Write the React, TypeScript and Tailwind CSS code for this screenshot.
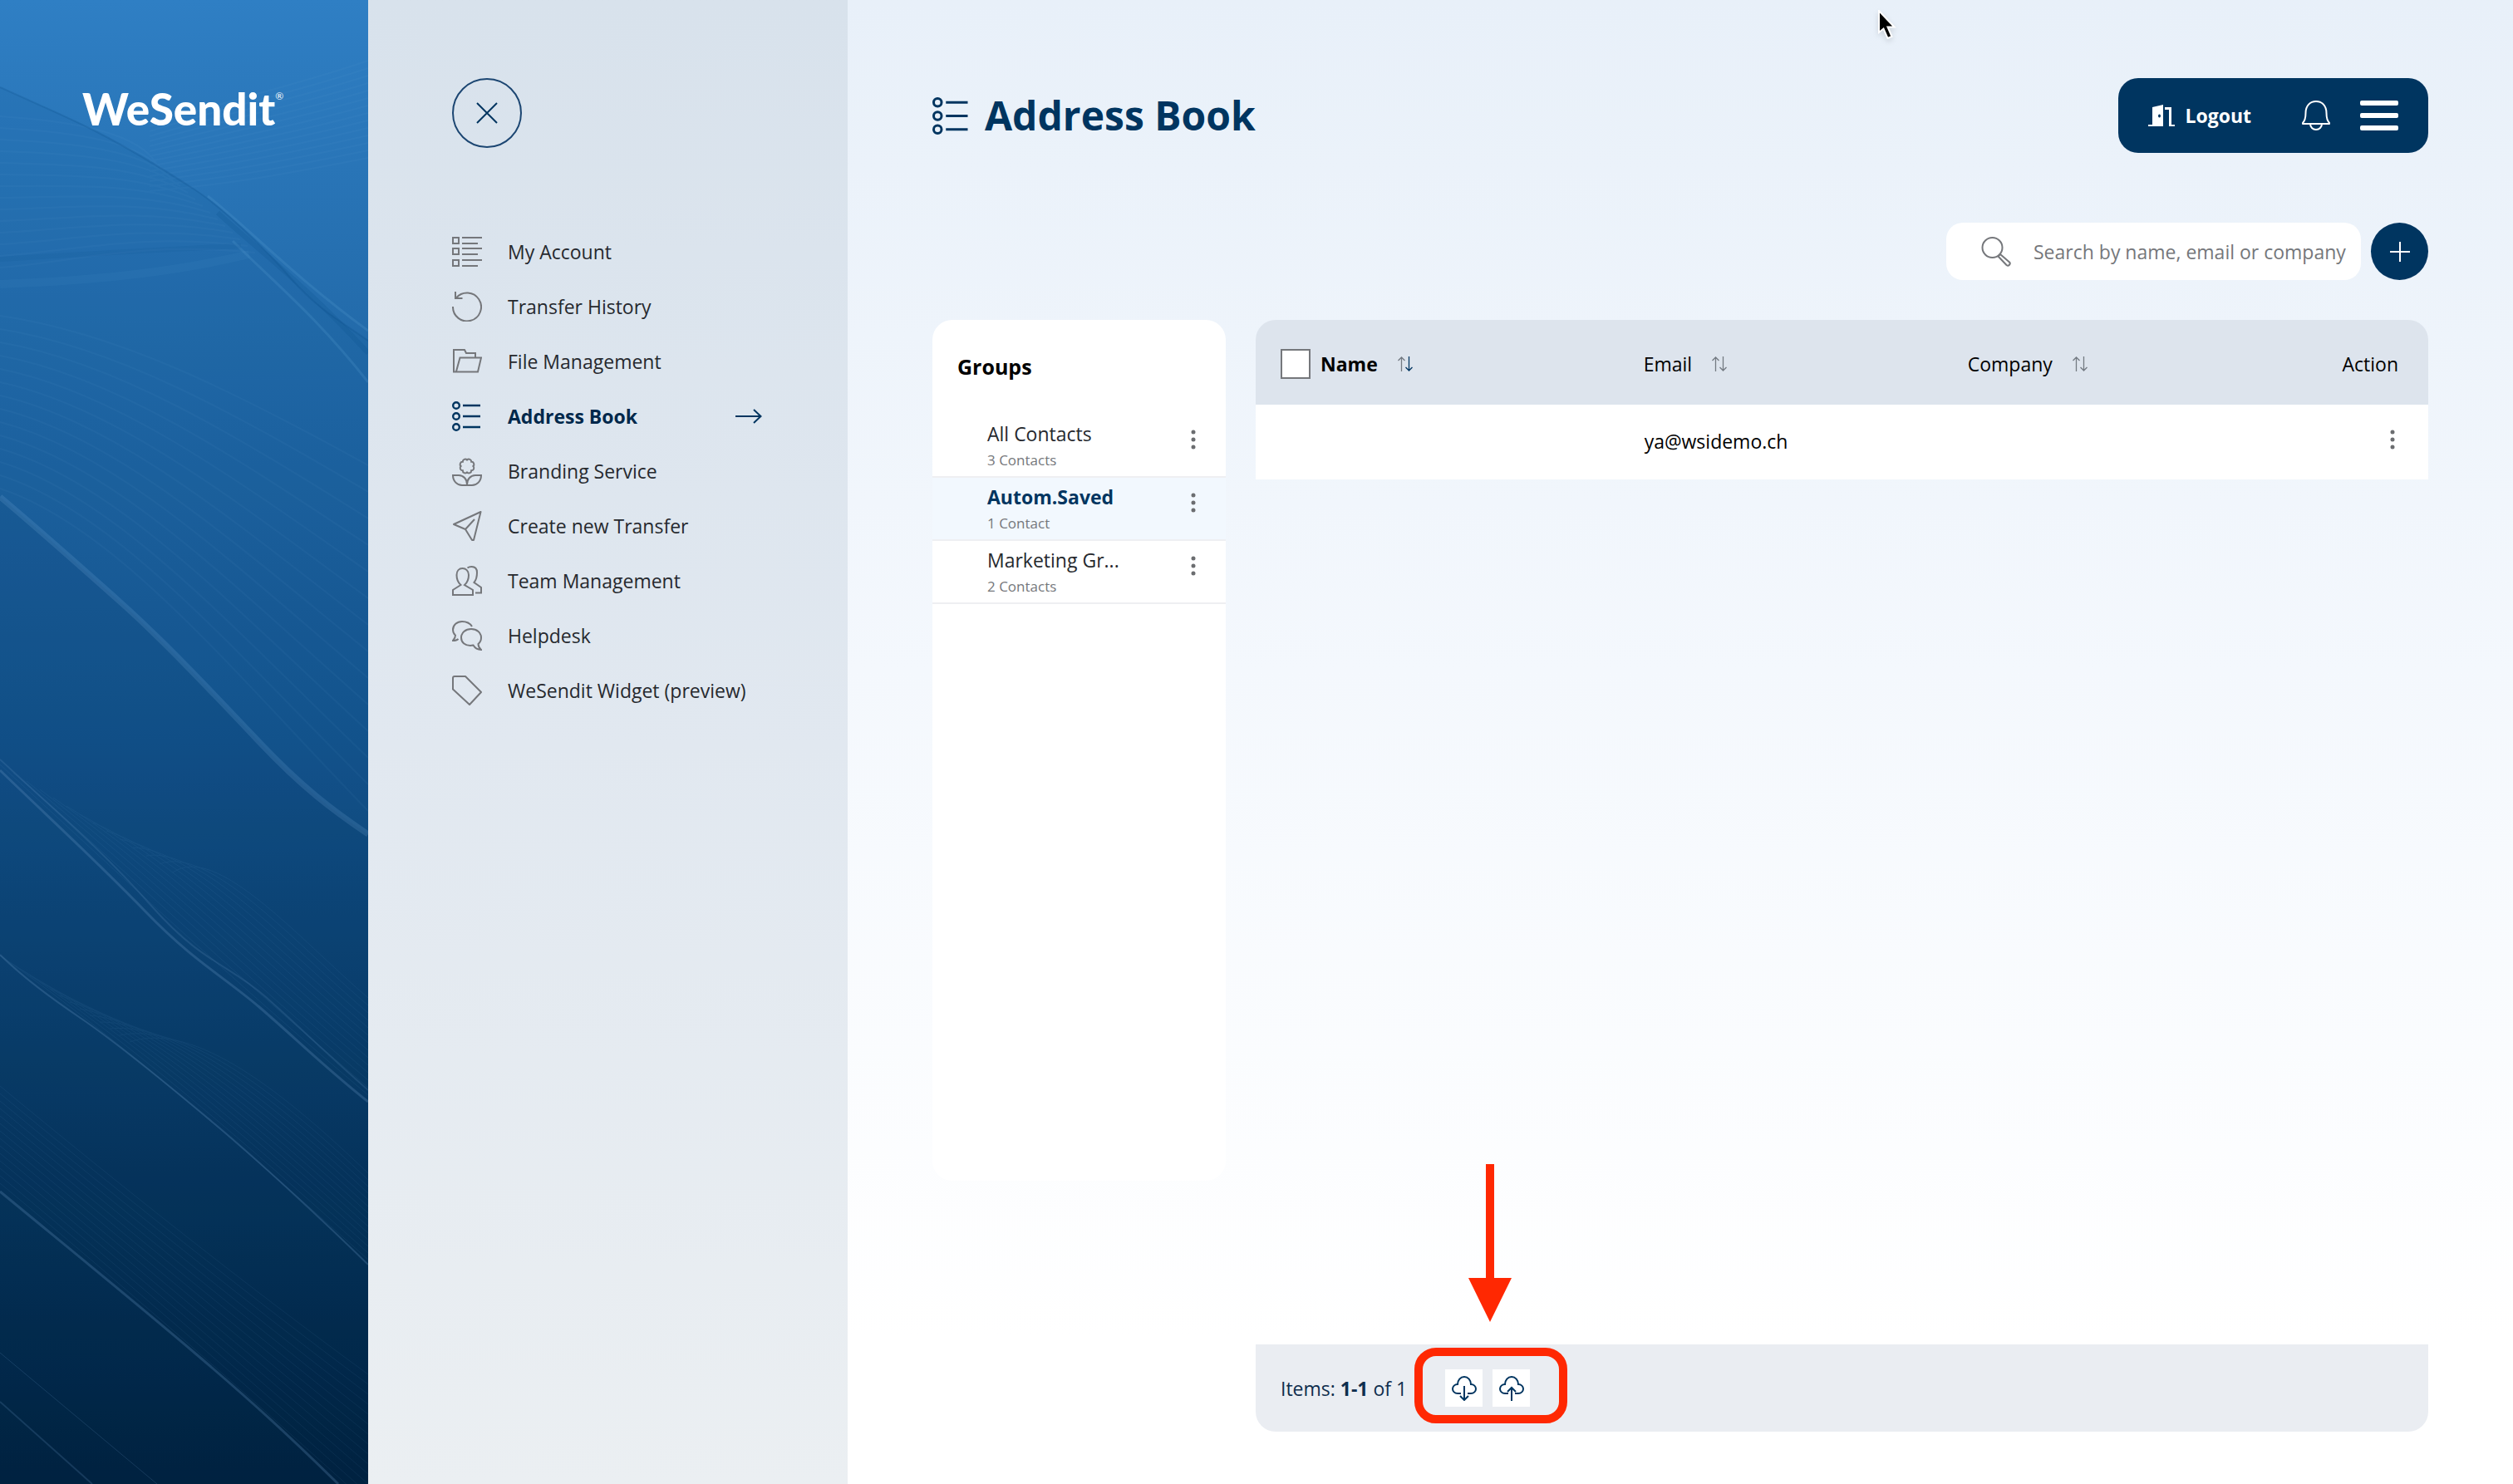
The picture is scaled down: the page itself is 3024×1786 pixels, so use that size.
import { useState } from "react";
import type { ReactNode } from "react";

interface NavItem {
  label: string;
  icon: ReactNode;
  active?: boolean;
}

interface Group {
  id: string;
  name: string;
  count: string;
}

function Icon({ className = "size-9", children }: { className?: string; children: ReactNode }) {
  return (
    <svg viewBox="0 0 36 36" fill="none" stroke="currentColor" strokeWidth="2" className={`shrink-0 ${className}`} aria-hidden="true">
      {children}
    </svg>
  );
}

function ListIcon({ className }: { className?: string }) {
  return (
    <Icon className={className}>
      <g strokeWidth="2.400">
        <circle cx="5" cy="5" r="3.800" />
        <circle cx="5" cy="18" r="3.800" />
        <circle cx="5" cy="31" r="3.800" />
        <path d="M13 5h21M13 18h21M13 31h21" />
      </g>
    </Icon>
  );
}

const NAV: NavItem[] = [
  {
    label: "My Account",
    icon: (
      <Icon>
        <path d="M1 1h7v7H1zM1 14h7v7H1zM1 28h7v7H1zM12 1h24M12 8h19M12 14h24M12 21h19M12 28h24M12 35h19" />
      </Icon>
    ),
  },
  {
    label: "Transfer History",
    icon: (
      <Icon>
        <path d="M1 18A17 17 0 1 0 5 7.500M4 0v8h8.500" />
      </Icon>
    ),
  },
  {
    label: "File Management",
    icon: (
      <Icon>
        <path d="M28 13V8H17l-2-4H2v26.500h29L35 13.500H9.500L5 30" />
      </Icon>
    ),
  },
  { label: "Address Book", icon: <ListIcon />, active: true },
  {
    label: "Branding Service",
    icon: (
      <Icon>
        <path d="M25.400 12a3 3 0 0 1-2.200 5.200A3 3 0 0 1 18 19.400a3 3 0 0 1-5.200-2.200A3 3 0 0 1 10.600 12a3 3 0 0 1 2.200-5.200A3 3 0 0 1 18 4.600a3 3 0 0 1 5.200 2.200A3 3 0 0 1 25.400 12z" />
        <path d="M1 23c0 7 5 12 11 12h12c6 0 11-5 11-12h-7c-6 0-10 5-10 11 0-6-4-11-10-11z" />
      </Icon>
    ),
  },
  {
    label: "Create new Transfer",
    icon: (
      <Icon>
        <path strokeLinejoin="round" d="M2 16 34.500 1 26 35h-2l-8-13zM16 22 27 10" />
      </Icon>
    ),
  },
  {
    label: "Team Management",
    icon: (
      <Icon>
        <path d="M1 35v-6l9.500-6C7 20 5.500 15 5.500 11c0-5 3-8 7-8s7.500 3 7.500 8c0 4-1.500 9-5 12l10 6v6z" />
        <path d="M18.500 2.500C20 1.300 22 1 23.500 1 28 1 30 4 30 8c0 5-1 9-3.500 12l8.500 6v6.500h-7" />
      </Icon>
    ),
  },
  {
    label: "Helpdesk",
    icon: (
      <Icon>
        <path d="M31.500 28c2.300-2 3.500-4.500 3.500-7.500C35 14.500 30 10 23 10s-12 4.500-12 10.500S16 30 22 30c1.500 0 2.500-.2 3.500-.4C27.500 33 31 35 35 35c-2.500-2-3.500-4-3.500-7z" />
        <path d="M24 7c-2.500-4-7-6-12-6C6 1 1 5 1 11c0 3 1 5 3 6.500 0 2.500-1 4.500-3 6.500 3 0 5-.5 6.500-2" />
      </Icon>
    ),
  },
  {
    label: "WeSendit Widget (preview)",
    icon: (
      <Icon>
        <path strokeLinejoin="round" d="M1 3c0-1.200.8-2 2-2h13l19 19-14 15L1 16.500z" />
      </Icon>
    ),
  },
];

const GROUPS: Group[] = [
  { id: "all", name: "All Contacts", count: "3 Contacts" },
  { id: "auto", name: "Autom.Saved", count: "1 Contact" },
  { id: "marketing", name: "Marketing Gr...", count: "2 Contacts" },
];

// soft ridges of the mountain artwork: [path, colour, width, opacity]
const RIDGES: [string, string, number, number][] = [
  ["M0 105C50 128 80 140 117 159S200 206 234 228 320 300 351 336 415 390 443 410", "#0b4f8c", 2, 0.25],
  ["M250 236C300 275 350 330 443 398", "#5fa3d6", 3, 0.2],
  ["M262 256C310 300 370 345 443 425", "#0b4f8c", 6, 0.2],
  ["M280 290C330 340 380 380 443 460", "#5fa3d6", 3, 0.2],
  ["M0 342C100 338 200 330 300 306", "#5fa3d6", 10, 0.08],
  ["M0 312C100 306 200 300 290 296", "#0b4f8c", 6, 0.1],
  ["M0 598C50 640 90 676 143 723S260 838 312 893 400 975 443 1004", "#7fb0dc", 7, 0.18],
  ["M0 927C60 985 120 1040 176 1098S270 1176 312 1212 390 1284 443 1326", "#6f9dc6", 3, 0.25],
  ["M0 914C60 970 120 1020 182 1090S275 1160 320 1200 395 1270 443 1312", "#6f9dc6", 2, 0.18],
  ["M0 1149C30 1178 60 1200 98 1226S210 1312 260 1354 390 1470 443 1522", "#6f9dc6", 2, 0.25],
  ["M0 1434C80 1500 160 1565 234 1628S350 1730 407 1786", "#6f9dc6", 3, 0.25],
  ["M0 1687 111 1786", "#6f9dc6", 2, 0.2],
  ["M0 1628 189 1786", "#6f9dc6", 1, 0.2],
];

const STEPS = Array.from({ length: 14 }, (_, i) => i);

function MountainArt() {
  return (
    <svg viewBox="0 0 443 1786" preserveAspectRatio="none" fill="none" className="absolute inset-0 size-full" aria-hidden="true">
      <path d="M0 105C50 128 80 140 117 159S200 206 234 228 320 300 351 336 415 390 443 410V1786H0z" fill="#0a4a85" opacity="0.1" />
      <path d="M0 598C50 640 90 676 143 723S260 838 312 893 400 975 443 1004V1786H0z" fill="#04294e" opacity="0.08" />
      <g stroke="#79b2e0" strokeWidth="2" opacity="0.05">
        {STEPS.map((i) => (
          <path key={i} d={`M0 ${140 + i * 14}C90 ${146 + i * 13} 170 ${160 + i * 10} ${190 + i * 9} ${200 + i * 8}`} />
        ))}
        {STEPS.map((i) => (
          <path key={i} d={`M0 ${380 + i * 16}C140 ${400 + i * 18} 280 ${470 + i * 26} 443 ${560 + i * 32}`} />
        ))}
        {STEPS.map((i) => (
          <path key={i} d={`M180 ${230 - i * 6}C280 ${222 - i * 8} 360 ${206 - i * 8} 443 ${190 - i * 9}`} />
        ))}
      </g>
      <g stroke="#79b2e0" opacity="0.07">
        {STEPS.map((i) => (
          <path key={i} d={`M${i * 16} ${920 + i * 10}C${130 + i * 10} ${1040 - i * 2} ${280 + i * 6} ${1180 - i * 4} 443 ${1318 - i * 9}`} />
        ))}
        {STEPS.map((i) => (
          <path key={i} d={`M${i * 12} ${1150 + i * 8}C${130 + i * 8} ${1240 - i} ${280 + i * 5} ${1370 - i * 4} 443 ${1516 - i * 8}`} />
        ))}
        {STEPS.map((i) => (
          <path key={i} d={`M0 ${1424 - i * 9}C140 ${1540 - i * 9} 300 ${1680 - i * 10} 443 ${1810 - i * 12}`} />
        ))}
      </g>
      {RIDGES.map(([d, stroke, width, opacity]) => (
        <path key={d} d={d} stroke={stroke} strokeWidth={width} opacity={opacity} />
      ))}
    </svg>
  );
}

function Dots() {
  return (
    <svg viewBox="0 0 6 24" className="h-6 w-1.5" fill="currentColor" aria-hidden="true">
      <circle cx="3" cy="3" r="2.500" />
      <circle cx="3" cy="12" r="2.500" />
      <circle cx="3" cy="21" r="2.500" />
    </svg>
  );
}

function SortButton({ label, descending }: { label: string; descending?: boolean }) {
  return (
    <button aria-label={`Sort by ${label}`} className="text-[#737a82]">
      <svg viewBox="0 0 18 18" fill="none" stroke="currentColor" strokeWidth="1.300" className="size-[18px]" aria-hidden="true">
        <path d="M4.500 18V1M.5 5l4-4 4 4" />
        <path d="M13.500 0v17M9.500 13l4 4 4-4" className={descending ? "stroke-[#003560]" : ""} />
      </svg>
    </button>
  );
}

function CloudIcon({ up }: { up?: boolean }) {
  return (
    <svg viewBox="0 0 30 30" fill="none" stroke="currentColor" strokeWidth="2" className="size-[30px]" aria-hidden="true">
      <path d="M11 21H7c-3.500 0-6-2.500-6-5.500S3.500 10 7 10c0-5 3.500-9 8-9s8 4 8 9c3.500 0 6 2.500 6 5.500S26.500 21 23 21h-4" />
      {up ? <path d="M15 30V14M10 19l5-5 5 5" /> : <path d="M15 12v17M10 24l5 5 5-5" />}
    </svg>
  );
}

function BrandPanel() {
  return (
    <div className="relative w-[443px] shrink-0 bg-linear-to-b from-[#2f7fc4] from-0% via-[#14538c] via-50% to-[#011d37] to-100% px-[99px] pt-24">
      <MountainArt />
      <a href="#" className="relative flex items-start whitespace-nowrap font-['Lato',sans-serif] text-[53px] leading-[70px] font-black text-white">
        WeSendit
        <span className="pt-3 text-[12px] leading-4 font-normal">®</span>
      </a>
    </div>
  );
}

function Sidebar() {
  return (
    <aside className="w-[577px] shrink-0 bg-linear-to-b from-[#d8e2ec] via-[#e1e8f0] to-[#ebeff2] px-[101px] pt-[94px]">
      <button aria-label="Close menu" className="flex size-[84px] items-center justify-center rounded-full border-2 border-[#1c4672] text-[#003560]">
        <svg viewBox="0 0 26 26" fill="none" stroke="currentColor" strokeWidth="2" className="size-[26px]" aria-hidden="true">
          <path d="m1 1 24 24M25 1 1 25" />
        </svg>
      </button>
      <nav className="mt-[92px] flex flex-col">
        {NAV.map((item) => (
          <a
            key={item.label}
            href="#"
            aria-current={item.active ? "page" : undefined}
            className={`flex h-[66px] items-center whitespace-nowrap ${item.active ? "font-bold text-[#00284b]" : "text-[#26292e]"}`}
          >
            <span className={item.active ? "text-[#003560]" : "text-[#75777b]"}>{item.icon}</span>
            <span className="ml-[31px]">{item.label}</span>
            {item.active && (
              <svg viewBox="0 0 32 18" fill="none" stroke="#003560" strokeWidth="2" className="mr-0.5 ml-auto h-[18px] w-8" aria-hidden="true">
                <path d="M0 9h31M22 1l8.500 8-8.500 8" />
              </svg>
            )}
          </a>
        ))}
      </nav>
    </aside>
  );
}

function TopBar() {
  return (
    <header className="flex h-[90px] items-center justify-between">
      <h1 className="flex items-center gap-[18px] text-[48px] leading-[72px] font-bold text-[#003560]">
        <ListIcon className="size-[45px]" />
        Address Book
      </h1>
      <div className="flex h-full items-center rounded-3xl bg-[#003560] px-9 text-white">
        <button className="flex items-center gap-3 font-bold">
          <svg viewBox="0 0 32 26" fill="currentColor" className="h-[26px] w-8" aria-hidden="true">
            <path fillRule="evenodd" d="M0 24h5V3l13-3v26H0zM13.500 11.500a1.500 2 0 1 0 .01 0z" />
            <path d="M20 3h8v21h4v2h-7V6h-5z" />
          </svg>
          Logout
        </button>
        <button aria-label="Notifications" className="ml-[61px]">
          <svg viewBox="0 0 34 36" fill="none" stroke="currentColor" strokeWidth="2" strokeLinejoin="round" className="h-9 w-[34px]" aria-hidden="true">
            <path d="M1 27c3-3 3.500-6 3.500-12C4.500 6 10 1 17 1s12.500 5 12.500 14c0 6 .5 9 3.500 12v1H1zM10 28c0 4 3 7 7 7s7-3 7-7" />
          </svg>
        </button>
        <button aria-label="Menu" className="ml-9 flex w-[46px] flex-col gap-[9px]">
          <span className="h-1.5 rounded-xs bg-white" />
          <span className="h-1.5 rounded-xs bg-white" />
          <span className="h-1.5 rounded-xs bg-white" />
        </button>
      </div>
    </header>
  );
}

function SearchRow() {
  return (
    <div className="mt-[84px] flex items-center justify-end gap-3">
      <div className="flex h-[69px] w-[499px] items-center gap-[27px] rounded-[20px] bg-white pr-2 pl-[42px] text-[#75777b]">
        <Icon>
          <circle cx="13.500" cy="13" r="12" />
          <path d="M20.500 23.500 23 21l11 9.500c2 2-1 5.500-3.500 3.500z" strokeLinejoin="round" />
        </Icon>
        <input
          type="text"
          aria-label="Search contacts"
          placeholder="Search by name, email or company"
          className="h-full min-w-0 flex-1 bg-transparent outline-none placeholder:text-[#75777b]"
        />
      </div>
      <button aria-label="Add contact" className="flex size-[69px] items-center justify-center rounded-full bg-[#003560] text-white">
        <svg viewBox="0 0 24 24" stroke="currentColor" strokeWidth="2" className="size-6" aria-hidden="true">
          <path d="M12 0v24M0 12h24" />
        </svg>
      </button>
    </div>
  );
}

function GroupsCard() {
  const [selected, setSelected] = useState("auto");

  return (
    <section className="min-h-[1036px] w-[353px] shrink-0 self-start overflow-hidden rounded-3xl bg-white">
      <h2 className="px-[30px] pt-[38px] text-[25px] leading-9 font-bold text-black">Groups</h2>
      <ul className="mt-10">
        {GROUPS.map((group) => (
          <li
            key={group.id}
            className={`flex h-[76px] items-start border-b-2 border-[#eeeff2] pr-9 pl-[66px] ${selected === group.id ? "bg-[#f2f8fe]" : ""}`}
          >
            <button onClick={() => setSelected(group.id)} className="flex flex-1 flex-col pt-[7px] text-left">
              <span className={`leading-8 ${selected === group.id ? "font-bold text-[#003560]" : "text-[#26292e]"}`}>{group.name}</span>
              <span className="text-[17px] leading-8 text-[#75777b]">{group.count}</span>
            </button>
            <button aria-label={`${group.name} options`} className="pt-[18px] text-[#6b6d70]">
              <Dots />
            </button>
          </li>
        ))}
      </ul>
    </section>
  );
}

function ContactsTable() {
  return (
    <section className="flex min-w-0 flex-1 flex-col">
      <div className="overflow-hidden rounded-t-3xl">
        <table className="w-full table-fixed text-left text-black">
          <colgroup>
            <col className="w-[33%]" />
            <col className="w-[28%]" />
            <col className="w-[26%]" />
            <col className="w-[13%]" />
          </colgroup>
          <thead className="bg-[#dde4ed]">
            <tr className="h-[102px]">
              <th className="pt-1 pl-[30px]">
                <div className="flex items-center">
                  <input type="checkbox" aria-label="Select all contacts" className="size-9 appearance-none border-2 border-[#75777b] bg-white checked:bg-[#003560]" />
                  <span className="mr-6 ml-3 font-bold">Name</span>
                  <SortButton label="name" descending />
                </div>
              </th>
              <th className="pt-1 pl-px font-normal">
                <div className="flex items-center gap-6">
                  Email
                  <SortButton label="email" />
                </div>
              </th>
              <th className="pt-1 font-normal">
                <div className="-ml-1 flex items-center gap-6">
                  Company
                  <SortButton label="company" />
                </div>
              </th>
              <th className="pt-1 pr-9 text-right font-normal">Action</th>
            </tr>
          </thead>
          <tbody className="bg-white">
            <tr className="h-[90px]">
              <td />
              <td className="pb-0.5 pl-0.5">ya@wsidemo.ch</td>
              <td />
              <td className="pr-10 pb-3 text-right">
                <button aria-label="Contact options" className="align-middle text-[#6b6d70]">
                  <Dots />
                </button>
              </td>
            </tr>
          </tbody>
        </table>
      </div>

      <footer className="mt-auto flex h-[105px] items-center rounded-b-3xl bg-[#eaedf2] px-[30px] text-[#0f2e4d]">
        <p>
          Items: <b>1-1</b> of 1
        </p>
        <div className="relative ml-[46px] flex gap-3 text-[#003560]">
          <button aria-label="Import contacts" className="flex size-[45px] items-center justify-center bg-white">
            <CloudIcon />
          </button>
          <button aria-label="Export contacts" className="flex size-[45px] items-center justify-center bg-white">
            <CloudIcon up />
          </button>
          {/* callout around the import / export buttons */}
          <div className="pointer-events-none absolute -top-[26px] -right-[45px] -bottom-[20px] -left-[37px] rounded-[26px] border-10 border-[#ff2802]" />
          <svg viewBox="0 0 52 190" className="pointer-events-none absolute bottom-[102px] left-7 h-[190px] w-[52px]" fill="#ff2802" aria-hidden="true">
            <path d="M21 0h10v137h21L26 190 0 137h21z" />
          </svg>
        </div>
      </footer>
    </section>
  );
}

export default function App() {
  return (
    <div className="relative flex min-h-screen font-['Open_Sans','Noto_Sans',sans-serif] text-[23px] leading-9">
      <BrandPanel />
      <Sidebar />
      <main className="flex min-w-0 flex-1 flex-col bg-linear-to-b from-[#e8f0f9] from-0% via-[#f4f8fd] via-45% to-white to-90% px-[102px] pt-[94px] pb-[63px]">
        <TopBar />
        <SearchRow />
        <div className="mt-12 flex flex-1 gap-9">
          <GroupsCard />
          <ContactsTable />
        </div>
      </main>
      <svg viewBox="0 0 22 36" className="pointer-events-none absolute top-3 right-[742px] h-9 w-[22px] drop-shadow-md" aria-hidden="true">
        <path d="M1 1v26l5.500-4.500 5 11.500 5-2-5-11.500h8z" fill="#000" stroke="#fff" strokeWidth="2" />
      </svg>
    </div>
  );
}
